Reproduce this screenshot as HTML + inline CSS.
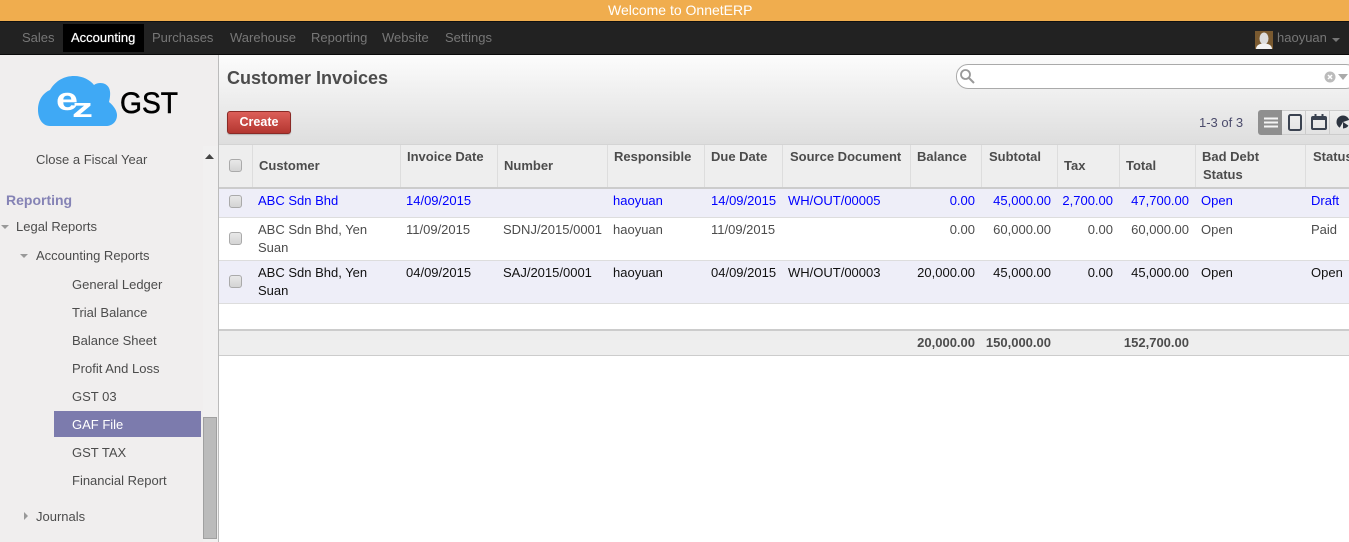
<!DOCTYPE html>
<html><head><meta charset="utf-8"><title>Customer Invoices</title>
<style>
html,body{margin:0;padding:0;width:1349px;height:542px;overflow:hidden;background:#fff;font:13px/18px "Liberation Sans",Arial,sans-serif;color:#4c4c4c}
div,span{position:absolute;white-space:nowrap}
span{margin-top:1px}
.m{top:28px;color:#777}
.s{color:#4c4c4c}
.h{font-weight:bold;color:#4c4c4c}
.v{width:1px;top:145px;height:42px;background:#ddd}
.cb{left:229px;width:11px;height:11px;border:1px solid #aaa;border-radius:3px;background:linear-gradient(#e8e8e8,#d4d4d4)}
.blue{color:#0000ff}
.dk{color:#111}
.r{text-align:right}
.vb{top:110px;width:23px;height:23px;border:1px solid #ccc;border-left:0;background:linear-gradient(#f0f0f0,#e2e2e2)}
</style></head><body>
<div style="left:0;top:0;width:1349px;height:21px;background:#f0ad4e"></div>
<div style="left:608px;top:1px;font-size:14px;color:#fff">Welcome to OnnetERP</div>
<div style="left:0;top:21px;width:1349px;height:33px;background:#222;border-top:1px solid #111;box-sizing:border-box"></div>
<div style="left:0;top:54px;width:1349px;height:1px;background:#0a0a0a"></div>
<div style="left:63px;top:24px;width:81px;height:28px;background:#000"></div>
<span class="m" style="left:22px">Sales</span>
<span class="m" style="left:71px;color:#fff;text-shadow:0 0 .6px #fff">Accounting</span>
<span class="m" style="left:152px">Purchases</span>
<span class="m" style="left:230px">Warehouse</span>
<span class="m" style="left:311px">Reporting</span>
<span class="m" style="left:382px">Website</span>
<span class="m" style="left:445px">Settings</span>
<svg style="position:absolute;left:1255px;top:31px" width="18" height="18" viewBox="0 0 18 18"><rect width="18" height="18" fill="#7a5a30"/><ellipse cx="9" cy="7.500" rx="4.500" ry="6" fill="#dcdcdc"/><path d="M1 18c0-4 4-5.500 8-5.500s8 1.500 8 5.500z" fill="#f2f2f2"/></svg>
<span class="m" style="left:1277px;top:28px">haoyuan</span>
<svg style="position:absolute;left:1332px;top:38px" width="8" height="4"><path d="M0 0h8L4 4z" fill="#777"/></svg>

<!-- sidebar -->
<div style="left:0;top:55px;width:218px;height:487px;background:#f0eeee"></div>
<div style="left:218px;top:55px;width:1px;height:487px;background:#bbb"></div>
<div style="left:203px;top:146px;width:15px;height:396px;background:#f1f0f0"></div>
<svg style="position:absolute;left:0;top:70px" width="200" height="65" viewBox="0 70 200 65">
<path d="M50 126C42 126 38 118 38 110C38 100 43 93 50 90C56 80 65 76 74 76C83 76 90 80 94 85C98 82 106 82 109 88C111 92 110 98 109 102C114 106 117 111 117 115C117 122 112 126 106 126Z" fill="#3fa9f5"/>
<text x="56" y="110" font-family="Liberation Sans" font-weight="bold" font-size="32" fill="#fff" textLength="22" lengthAdjust="spacingAndGlyphs">e</text>
<text x="72" y="117" font-family="Liberation Sans" font-weight="bold" font-size="27" fill="#fff" textLength="21" lengthAdjust="spacingAndGlyphs">z</text>
<text x="120" y="113" font-family="Liberation Sans" font-size="30" fill="#000" stroke="#000" stroke-width=".5" textLength="58" lengthAdjust="spacingAndGlyphs">GST</text>
</svg>
<span class="s" style="left:36px;top:150px">Close a Fiscal Year</span>
<svg style="position:absolute;left:205px;top:154px" width="9" height="5"><path d="M0 5h9L4.500 0z" fill="#444"/></svg>
<span style="left:6px;top:191px;margin-top:0;font-weight:bold;font-size:14px;color:#8583b5">Reporting</span>
<svg style="position:absolute;left:1px;top:225px" width="8" height="4"><path d="M0 0h8L4 4z" fill="#999"/></svg>
<span class="s" style="left:16px;top:217px">Legal Reports</span>
<svg style="position:absolute;left:20px;top:254px" width="8" height="4"><path d="M0 0h8L4 4z" fill="#999"/></svg>
<span class="s" style="left:36px;top:246px">Accounting Reports</span>
<span class="s" style="left:72px;top:275px">General Ledger</span>
<span class="s" style="left:72px;top:303px">Trial Balance</span>
<span class="s" style="left:72px;top:331px">Balance Sheet</span>
<span class="s" style="left:72px;top:359px">Profit And Loss</span>
<span class="s" style="left:72px;top:387px">GST 03</span>
<div style="left:54px;top:411px;width:147px;height:26px;background:#7c7bad"></div>
<span style="left:72px;top:415px;color:#fff">GAF File</span>
<span class="s" style="left:72px;top:443px">GST TAX</span>
<span class="s" style="left:72px;top:471px">Financial Report</span>
<svg style="position:absolute;left:24px;top:512px" width="4" height="8"><path d="M0 0v8l4-4z" fill="#999"/></svg>
<span class="s" style="left:36px;top:507px">Journals</span>
<div style="left:203px;top:417px;width:12px;height:120px;background:#bbb;border:1px solid #a0a0a0"></div>

<!-- header -->
<div style="left:219px;top:55px;width:1130px;height:89px;background:linear-gradient(#fcfcfc,#dedede)"></div>
<span style="left:227px;top:67px;margin-top:0;font-size:18px;line-height:22px;font-weight:bold;color:#4c4c4c">Customer Invoices</span>
<div style="left:956px;top:64px;width:400px;height:23px;border:1px solid #aaa;border-radius:12px;background:#fff"></div>
<svg style="position:absolute;left:959px;top:68px" width="16" height="16" viewBox="0 0 16 16"><circle cx="6.500" cy="6.500" r="4.500" fill="none" stroke="#999" stroke-width="1.800"/><path d="M10 10l5 5" stroke="#999" stroke-width="2"/></svg>
<svg style="position:absolute;left:1324px;top:71px" width="12" height="12" viewBox="0 0 12 12"><circle cx="6" cy="6" r="5.500" fill="#bbb"/><path d="M4 4l4 4M8 4l-4 4" stroke="#fff" stroke-width="1.500"/></svg>
<svg style="position:absolute;left:1338px;top:74px" width="10" height="6"><path d="M0 0h10L5 6z" fill="#aaa"/></svg>
<div style="left:227px;top:111px;width:62px;height:21px;border:1px solid #8a2a26;border-radius:3px;background:linear-gradient(#dc5f59,#b33630);box-shadow:0 1px 1px rgba(0,0,0,.2);color:#fff;font-weight:bold;font-size:12.500px;line-height:21px;text-align:center">Create</div>
<span style="left:1199px;top:113px;color:#4c4c6c">1-3 of 3</span>
<div style="left:1258px;top:110px;width:24px;height:25px;background:#8f8f8f;border-radius:3px 0 0 3px"></div>
<svg style="position:absolute;left:1264px;top:117px" width="14" height="11"><path d="M0 1.500h14M0 5.500h14M0 9.500h14" stroke="#f4f4f4" stroke-width="2"/></svg>
<div class="vb" style="left:1282px"></div>
<div class="vb" style="left:1306px"></div>
<div class="vb" style="left:1330px;width:30px"></div>
<svg style="position:absolute;left:1288px;top:114px" width="14" height="17"><rect x="1" y="1" width="12" height="15" rx="1.500" fill="none" stroke="#3a4250" stroke-width="2"/></svg>
<svg style="position:absolute;left:1311px;top:114px" width="16" height="16"><rect x="1" y="3" width="14" height="12" rx="1" fill="none" stroke="#3a4250" stroke-width="2"/><path d="M1 3h14v3H1z" fill="#3a4250"/><path d="M4.500 0v3M11.500 0v3" stroke="#3a4250" stroke-width="2"/></svg>
<svg style="position:absolute;left:1336px;top:115px" width="13" height="14" viewBox="0 0 13 14"><circle cx="7" cy="7" r="6.500" fill="#2c3440"/><path d="M7 7L3 14h4zM7 7l6-2v6z" fill="#e8e8e8"/></svg>

<!-- table header -->
<div style="left:219px;top:144px;width:1130px;height:1px;background:#d4d4d4"></div>
<div style="left:219px;top:145px;width:1130px;height:42px;background:#eee"></div>
<div style="left:219px;top:187px;width:1130px;height:2px;background:#ccc"></div>
<div class="v" style="left:252px"></div><div class="v" style="left:400px"></div><div class="v" style="left:497px"></div><div class="v" style="left:607px"></div><div class="v" style="left:704px"></div><div class="v" style="left:782px"></div><div class="v" style="left:910px"></div><div class="v" style="left:981px"></div><div class="v" style="left:1057px"></div><div class="v" style="left:1119px"></div><div class="v" style="left:1195px"></div><div class="v" style="left:1305px"></div>
<div class="cb" style="top:159px"></div>
<span class="h" style="left:259px;top:156px">Customer</span>
<span class="h" style="left:407px;top:147px">Invoice Date</span>
<span class="h" style="left:504px;top:156px">Number</span>
<span class="h" style="left:614px;top:147px">Responsible</span>
<span class="h" style="left:711px;top:147px">Due Date</span>
<span class="h" style="left:790px;top:147px">Source Document</span>
<span class="h" style="left:917px;top:147px">Balance</span>
<span class="h" style="left:989px;top:147px">Subtotal</span>
<span class="h" style="left:1064px;top:156px">Tax</span>
<span class="h" style="left:1126px;top:156px">Total</span>
<span class="h" style="left:1202px;top:147px">Bad Debt</span>
<span class="h" style="left:1203px;top:165px">Status</span>
<span class="h" style="left:1313px;top:147px">Status</span>

<!-- rows -->
<div style="left:219px;top:189px;width:1130px;height:28px;background:#eeeef8"></div>
<div style="left:219px;top:217px;width:1130px;height:1px;background:#ddd"></div>
<div style="left:219px;top:260px;width:1130px;height:1px;background:#ddd"></div>
<div style="left:219px;top:261px;width:1130px;height:42px;background:#eeeef8"></div>
<div style="left:219px;top:303px;width:1130px;height:1px;background:#ddd"></div>
<div class="cb" style="top:195px"></div>
<div class="cb" style="top:232px"></div>
<div class="cb" style="top:275px"></div>

<span class="blue" style="left:258px;top:191px">ABC Sdn Bhd</span>
<span class="blue" style="left:406px;top:191px">14/09/2015</span>
<span class="blue" style="left:613px;top:191px">haoyuan</span>
<span class="blue" style="left:711px;top:191px">14/09/2015</span>
<span class="blue" style="left:788px;top:191px">WH/OUT/00005</span>
<span class="blue r" style="right:374px;top:191px">0.00</span>
<span class="blue r" style="right:298px;top:191px">45,000.00</span>
<span class="blue r" style="right:236px;top:191px">2,700.00</span>
<span class="blue r" style="right:160px;top:191px">47,700.00</span>
<span class="blue" style="left:1201px;top:191px">Open</span>
<span class="blue" style="left:1311px;top:191px">Draft</span>

<span style="left:258px;top:220px">ABC Sdn Bhd, Yen</span>
<span style="left:258px;top:238px">Suan</span>
<span style="left:406px;top:220px">11/09/2015</span>
<span style="left:503px;top:220px">SDNJ/2015/0001</span>
<span style="left:613px;top:220px">haoyuan</span>
<span style="left:711px;top:220px">11/09/2015</span>
<span class="r" style="right:374px;top:220px">0.00</span>
<span class="r" style="right:298px;top:220px">60,000.00</span>
<span class="r" style="right:236px;top:220px">0.00</span>
<span class="r" style="right:160px;top:220px">60,000.00</span>
<span style="left:1201px;top:220px">Open</span>
<span style="left:1311px;top:220px">Paid</span>

<span class="dk" style="left:258px;top:263px">ABC Sdn Bhd, Yen</span>
<span class="dk" style="left:258px;top:281px">Suan</span>
<span class="dk" style="left:406px;top:263px">04/09/2015</span>
<span class="dk" style="left:503px;top:263px">SAJ/2015/0001</span>
<span class="dk" style="left:613px;top:263px">haoyuan</span>
<span class="dk" style="left:711px;top:263px">04/09/2015</span>
<span class="dk" style="left:788px;top:263px">WH/OUT/00003</span>
<span class="dk r" style="right:374px;top:263px">20,000.00</span>
<span class="dk r" style="right:298px;top:263px">45,000.00</span>
<span class="dk r" style="right:236px;top:263px">0.00</span>
<span class="dk r" style="right:160px;top:263px">45,000.00</span>
<span class="dk" style="left:1201px;top:263px">Open</span>
<span class="dk" style="left:1311px;top:263px">Open</span>

<!-- footer -->
<div style="left:219px;top:329px;width:1130px;height:2px;background:#ccc"></div>
<div style="left:219px;top:331px;width:1130px;height:24px;background:#eee"></div>
<div style="left:219px;top:355px;width:1130px;height:1px;background:#ccc"></div>
<span class="h r" style="right:374px;top:333px">20,000.00</span>
<span class="h r" style="right:298px;top:333px">150,000.00</span>
<span class="h r" style="right:160px;top:333px">152,700.00</span>
</body></html>
